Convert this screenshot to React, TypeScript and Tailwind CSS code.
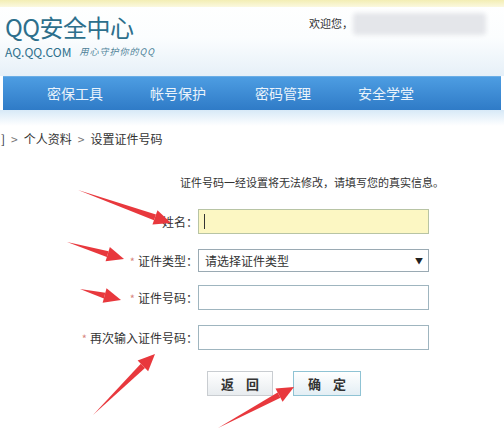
import React from "react";

const font = { fontFamily: '"Noto Sans CJK SC", "Noto Sans", sans-serif' };

function Arrows() {
  const arrows = [
    [78, 190, 171, 223],
    [67, 242, 124, 259],
    [80, 289, 121, 300],
    [93, 415, 155, 354],
    [218, 428, 294, 387],
  ];
  return (
    <svg className="absolute left-0 top-0 pointer-events-none" width="504" height="435">
      {arrows.map(([x1, y1, x2, y2], i) => {
        const dx = x2 - x1;
        const dy = y2 - y1;
        const len = Math.hypot(dx, dy);
        const ux = dx / len;
        const uy = dy / len;
        const px = -uy;
        const py = ux;
        const hl = 17;
        const hw = 7.5;
        const bx = x2 - ux * hl;
        const by = y2 - uy * hl;
        const body = `M${x1},${y1} L${bx + px * 3},${by + py * 3} L${bx - px * 3},${by - py * 3} Z`;
        const head = `M${x2},${y2} L${bx + px * hw},${by + py * hw} L${bx - px * hw},${by - py * hw} Z`;
        return (
          <g key={i} fill="#e8383d">
            <path d={body} />
            <path d={head} />
          </g>
        );
      })}
    </svg>
  );
}

export default function App() {
  return (
    <div className="relative w-[504px] h-[435px] bg-white overflow-hidden" style={font}>
      {/* header */}
      <div className="h-[76px] bg-gradient-to-b from-[#ffffff] via-[#fbfdfe] to-[#e6f0f8]">
        <div className="h-[7px] bg-gradient-to-b from-[#f3eeb4] to-[#fbf8df]"></div>
        <div className="flex justify-between pl-[5px] pr-[18px]">
          <div className="pt-[6px]">
            <div className="text-[24px] leading-[28px] text-[#2c6f8c] tracking-[-0.5px]">QQ安全中心</div>
            <div className="flex items-center gap-[8px] mt-[4px] text-[#2e6f8b]">
              <span className="text-[12px] leading-[14px]">AQ.QQ.COM</span>
              <span className="text-[9px] italic leading-[14px] tracking-[1px] text-[#4b7f97]">用心守护你的QQ</span>
            </div>
          </div>
          <div className="flex items-start pt-[6px]">
            <span className="text-[11px] leading-[18px] text-[#333] mt-[1px]">欢迎您，</span>
            <div className="w-[133px] h-[22px] bg-[#e4e6ea] rounded-[4px] blur-[2px]"></div>
          </div>
        </div>
      </div>
      {/* nav */}
      <div className="mx-[3px] h-[34px] bg-gradient-to-b from-[#4d9de2] to-[#2f7bc7] border-t border-[#6aaee6] flex items-center">
        <span className="text-[14px] text-[#eaf3fb] ml-[44px]">密保工具</span>
        <span className="text-[14px] text-[#eaf3fb] ml-[47px]">帐号保护</span>
        <span className="text-[14px] text-[#eaf3fb] ml-[49px]">密码管理</span>
        <span className="text-[14px] text-[#eaf3fb] ml-[47px]">安全学堂</span>
      </div>
      <div className="h-[16px] bg-gradient-to-b from-[#d7e9f7] to-[#ffffff]"></div>
      {/* breadcrumb */}
      <div className="flex items-center gap-[6px] text-[12px] leading-[20px] text-[#333] mt-[3px] pl-[1px]">
        <span>]</span>
        <span className="text-[#777]">&gt;</span>
        <span>个人资料</span>
        <span className="text-[#777]">&gt;</span>
        <span>设置证件号码</span>
      </div>
      {/* info */}
      <div className="text-[11px] leading-[16px] text-[#333] pl-[180px] mt-[25px]">证件号码一经设置将无法修改，请填写您的真实信息。</div>
      {/* form */}
      <div className="flex flex-col gap-[15px] mt-[19px]">
        <div className="flex items-center">
          <label className="w-[198px] text-right text-[12px] text-[#333]">姓名：</label>
          <div className="w-[231px] h-[25px] bg-[#fcf7c3] border border-[#b8c4a4] flex items-center pl-[5px]">
            <div className="w-[1px] h-[15px] bg-[#333]"></div>
          </div>
        </div>
        <div className="flex items-center">
          <label className="w-[198px] text-right text-[12px] text-[#333]"><span className="text-[#d7867f] text-[11px] mr-[3px]">*</span>证件类型：</label>
          <div className="w-[231px] h-[23px] bg-white border border-[#9aaab3] flex items-center justify-between pl-[6px] pr-[5px]">
            <span className="text-[12px] text-[#333]">请选择证件类型</span>
            <span className="text-[8px] text-[#222]">▼</span>
          </div>
        </div>
        <div className="flex items-center mt-[-2px]">
          <label className="w-[198px] text-right text-[12px] text-[#333]"><span className="text-[#d7867f] text-[11px] mr-[3px]">*</span>证件号码：</label>
          <div className="w-[231px] h-[25px] bg-white border border-[#9fb5bf]"></div>
        </div>
        <div className="flex items-center">
          <label className="w-[198px] text-right text-[12px] text-[#333]"><span className="text-[#d7867f] text-[11px] mr-[3px]">*</span>再次输入证件号码：</label>
          <div className="w-[231px] h-[25px] bg-white border border-[#9fb5bf]"></div>
        </div>
      </div>
      {/* buttons */}
      <div className="flex gap-[20px] pl-[207px] mt-[21px]">
        <button className="w-[66px] h-[25px] bg-gradient-to-b from-[#ffffff] to-[#e8ecef] border border-[#c9cdd1] text-[13px] font-bold text-[#333] tracking-[12px] pl-[12px]">返回</button>
        <button className="w-[68px] h-[25px] bg-gradient-to-b from-[#ffffff] to-[#e3eef4] border border-[#8fc3d4] text-[13px] font-bold text-[#333] tracking-[12px] pl-[12px]">确定</button>
      </div>
      <Arrows />
    </div>
  );
}
